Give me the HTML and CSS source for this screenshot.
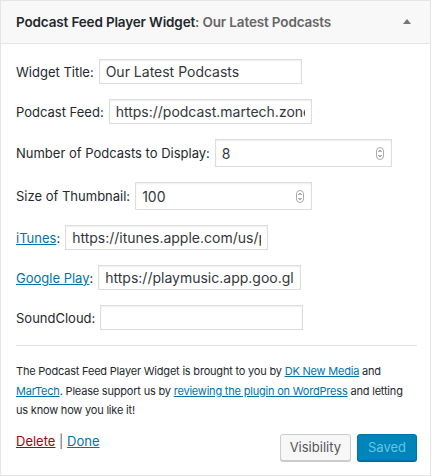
FILE: index.html
```html
<!DOCTYPE html>
<html>
<head>
<meta charset="utf-8">
<link rel="stylesheet" href="styles.css">
</head>
<body>
<div class="widget">
  <div class="widget-top">
    <h3 class="widget-title">Podcast Feed Player Widget<span class="in-title">: Our Latest Podcasts</span></h3>
    <svg class="toggle" width="8" height="6" viewBox="0 0 8 6"><path d="M0 6 L4 1 L8 6 Z" fill="#72777c"/></svg>
  </div>
  <div class="widget-inside">
    <div class="row"><label>Widget Title:</label><input class="txt" type="text" value="Our Latest Podcasts"></div>
    <div class="row"><label>Podcast Feed:</label><input class="txt" type="text" value="https://podcast.martech.zone/feed/"></div>
    <div class="row"><label>Number of Podcasts to Display:</label><div class="num"><span>8</span><svg width="8" height="13" viewBox="0 0 8 13"><rect x="0.5" y="0.5" width="7" height="12" rx="3.5" fill="#fff" stroke="#aaa"/><path d="M2.5 5 L4 3.3 L5.5 5 M2.5 8 L4 9.7 L5.5 8" fill="none" stroke="#555" stroke-width="0.9"/></svg></div></div>
    <div class="row"><label>Size of Thumbnail:</label><div class="num"><span>100</span><svg width="8" height="13" viewBox="0 0 8 13"><rect x="0.5" y="0.5" width="7" height="12" rx="3.5" fill="#fff" stroke="#aaa"/><path d="M2.5 5 L4 3.3 L5.5 5 M2.5 8 L4 9.7 L5.5 8" fill="none" stroke="#555" stroke-width="0.9"/></svg></div></div>
    <div class="row"><label><a href="#">iTunes</a>:</label><input class="txt" type="text" value="https://itunes.apple.com/us/podcast"></div>
    <div class="row"><label><a href="#">Google Play</a>:</label><input class="txt" type="text" value="https://playmusic.app.goo.gl/"></div>
    <div class="row"><label>SoundCloud:</label><input class="txt" type="text" value=""></div>
    <hr class="sep">
    <p class="about">The Podcast Feed Player Widget is brought to you by <a href="#">DK New Media</a> and <a href="#">MarTech</a>. Please support us by <a href="#">reviewing the plugin on WordPress</a> and letting us know how you like it!</p>
    <div class="actions">
      <div class="links"><a href="#" class="delete">Delete</a> | <a href="#">Done</a></div>
      <div class="buttons">
        <button class="btn">Visibility</button>
        <button class="btn primary">Saved</button>
      </div>
    </div>
  </div>
</div>
</body>
</html>
```

FILE: styles.css
```css
* { box-sizing: border-box; }
html, body { margin: 0; padding: 0; background: #fff; }
body {
  font-family: Inter, "Noto Sans", "Liberation Sans", sans-serif;
  color: #23282d;
  font-size: 13px;
}
.widget {
  width: 431px;
  height: 476px;
  border: 1px solid #e5e5e5;
  background: #fff;
}
.widget-top {
  height: 43px;
  background: #f8f8f8;
  border-bottom: 1px solid #e5e5e5;
  display: flex;
  align-items: center;
  justify-content: space-between;
  padding: 0 19px 0 15px;
}
.widget-title {
  margin: 0;
  font-size: 13.5px;
  font-weight: 600;
  color: #23282d;
  letter-spacing: -0.15px;
}
.in-title { color: #666; }
.toggle { margin-top: -2px; }
.widget-inside { padding: 15px 14px 0 15px; }
.row {
  display: flex;
  align-items: center;
  gap: 5px;
  margin-bottom: 15px;
}
.row label { font-size: 13px; color: #23282d; white-space: nowrap; }
a { color: #0073aa; text-decoration: underline; }
.txt {
  width: 203px;
  height: 25px;
  border: 1px solid #ddd;
  box-shadow: inset 0 1px 2px rgba(0,0,0,0.07);
  font-family: inherit;
  font-size: 14px;
  color: #32373c;
  padding: 2px 6px;
  margin: 0;
  outline: none;
  background: #fff;
}
.num {
  width: 177px;
  height: 28px;
  border: 1px solid #ddd;
  box-shadow: inset 0 1px 2px rgba(0,0,0,0.07);
  display: flex;
  align-items: center;
  justify-content: space-between;
  padding: 0 7px 0 6px;
  font-size: 14px;
  color: #32373c;
}
.sep {
  border: 0;
  border-top: 1px solid #e5e5e5;
  margin: 0;
  width: 401px;
}
.about {
  font-size: 11px;
  letter-spacing: -0.2px;
  line-height: 19.5px;
  margin: 16px 0 0 0;
  color: #23282d;
}
.actions {
  display: flex;
  justify-content: space-between;
  align-items: flex-start;
  margin-top: 12px;
  width: 401px;
}
.links { font-size: 13px; color: #666; padding-top: 0; }
.delete { color: #a00; }
.buttons { display: flex; gap: 6px; padding-top: 1px; }
.btn {
  height: 27px;
  font-family: inherit;
  font-size: 13px;
  padding: 0 9px;
  border: 1px solid #ccc;
  border-radius: 3px;
  background: #f7f7f7;
  color: #555;
  box-shadow: 0 1px 0 #ccc;
  margin: 0;
}
.btn.primary {
  background: #0085ba;
  border-color: #0073aa;
  color: #66c6e4;
  box-shadow: 0 1px 0 #006799;
  width: 60px;
}
```
